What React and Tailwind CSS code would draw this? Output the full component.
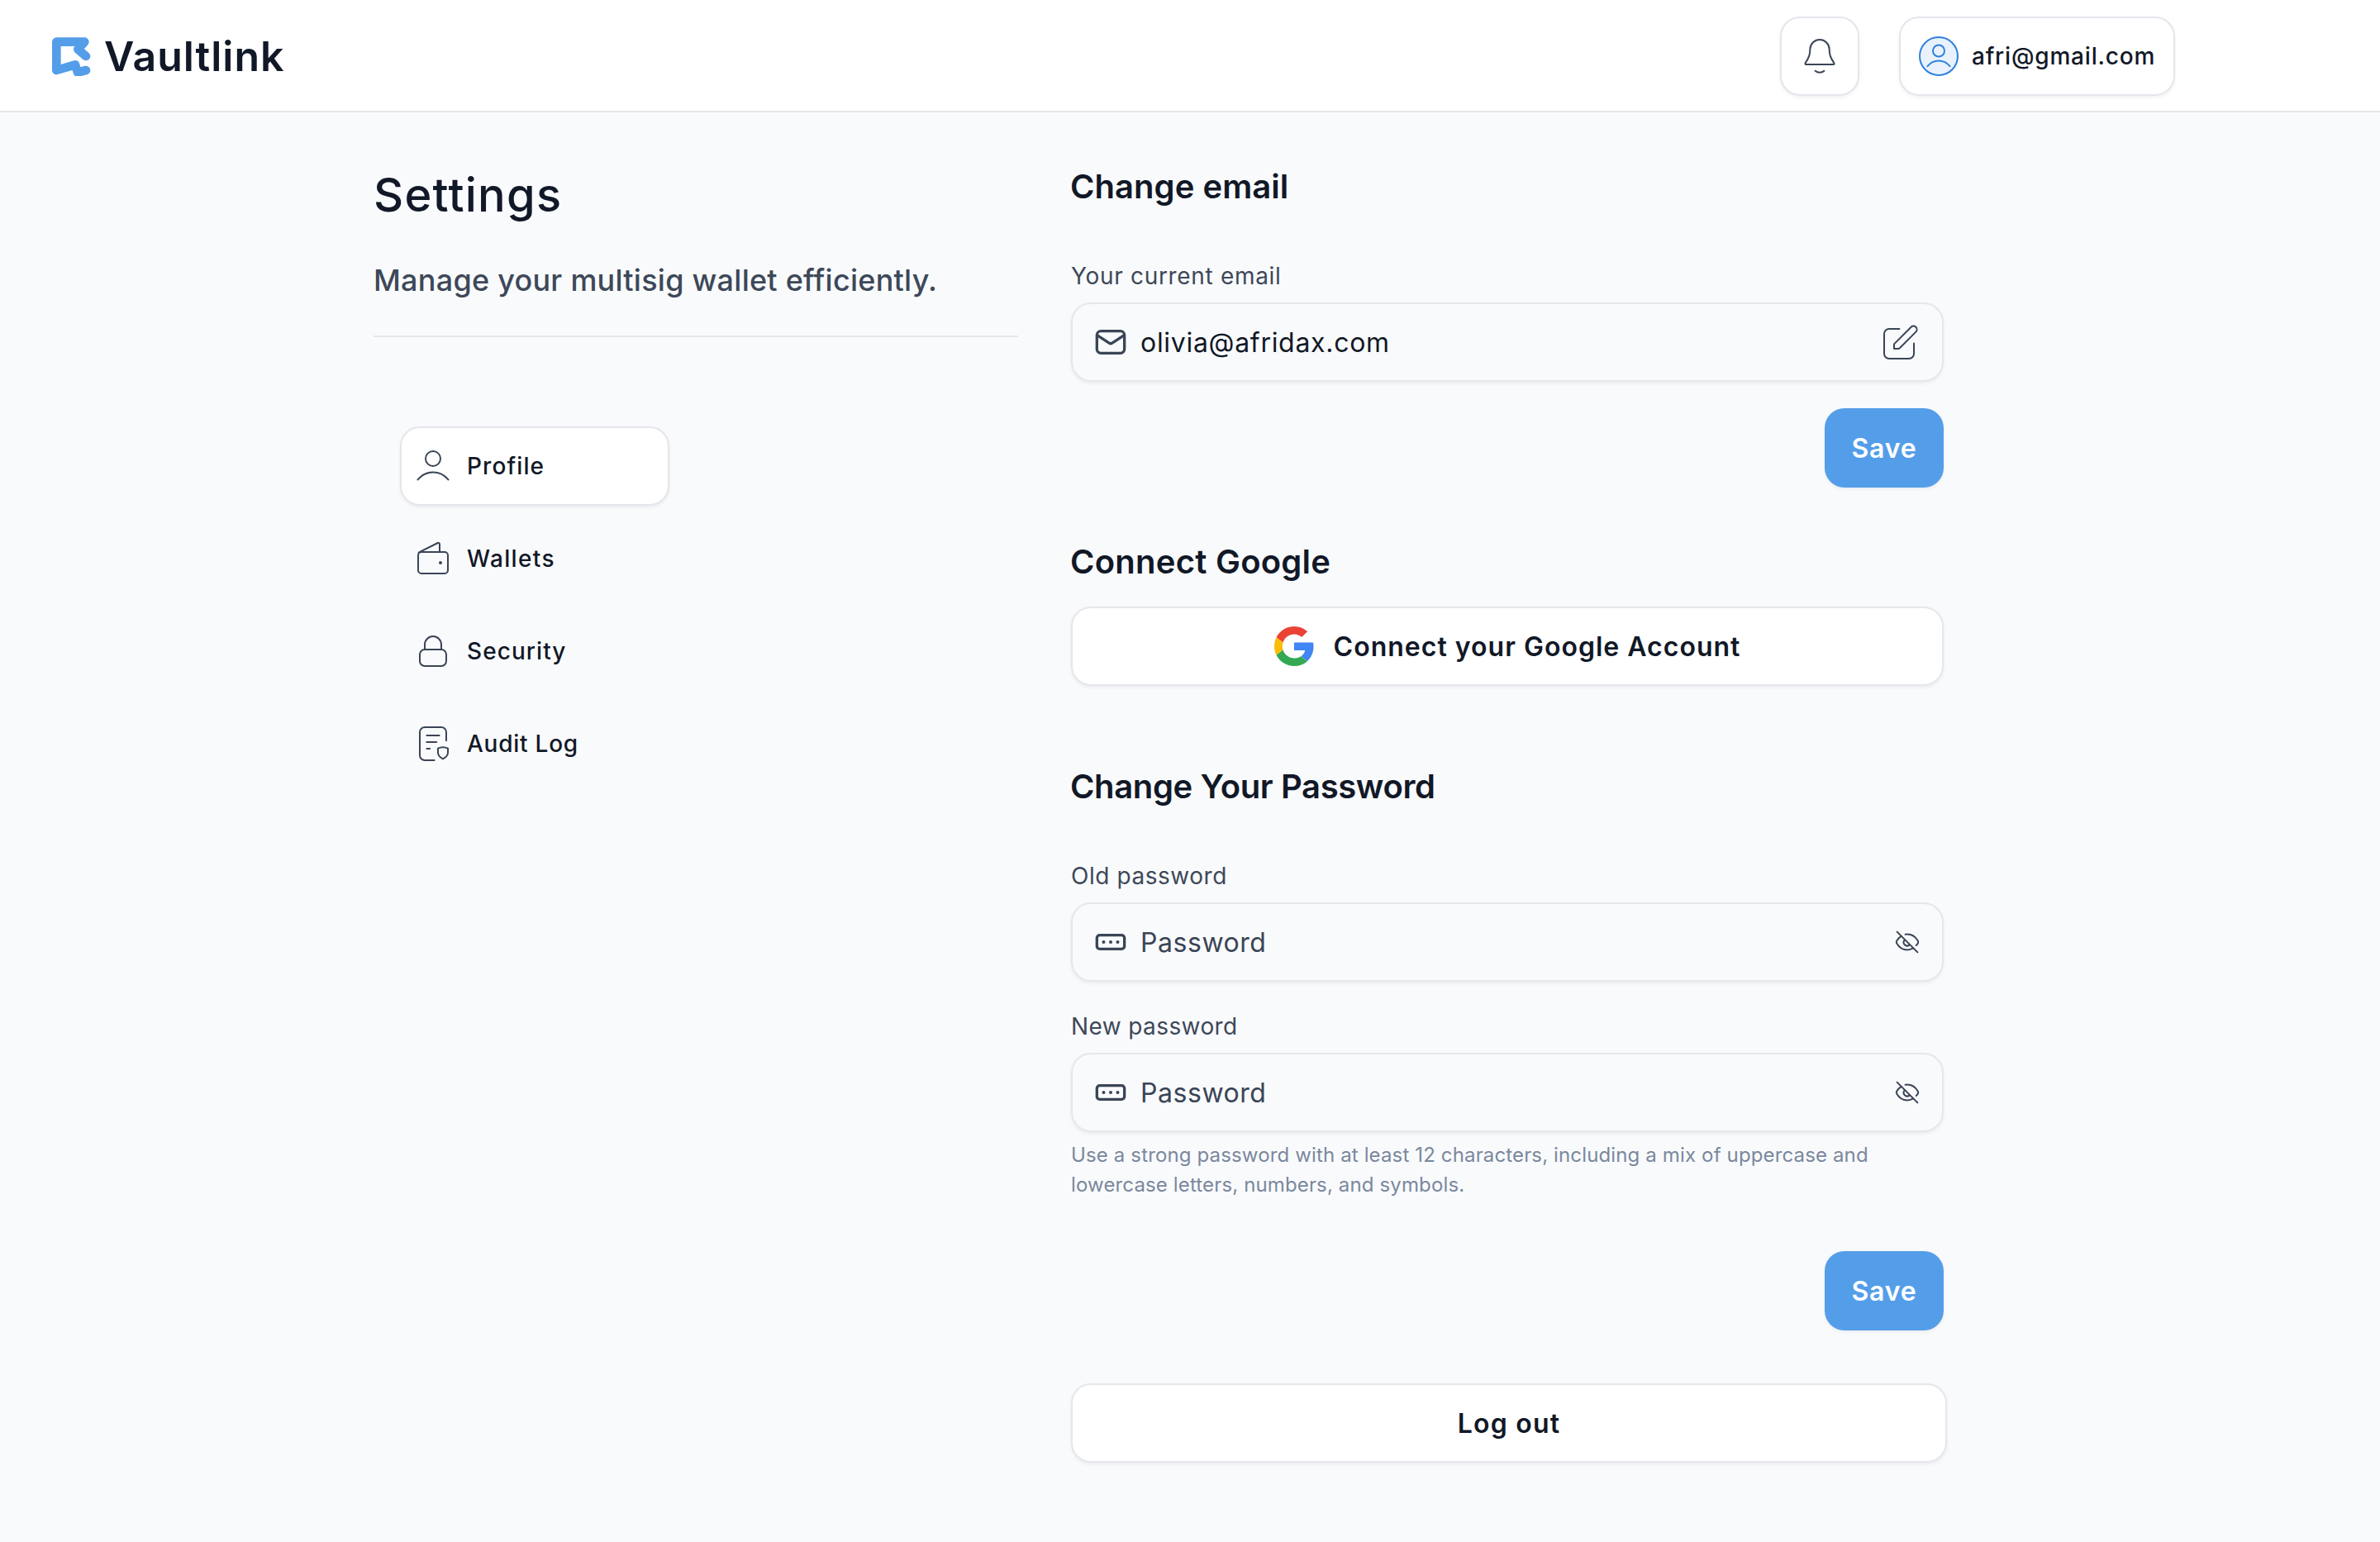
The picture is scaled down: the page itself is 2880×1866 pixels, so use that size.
const strokeProps = {
  fill: 'none',
  stroke: 'currentColor',
  strokeLinecap: 'round',
  strokeLinejoin: 'round',
};

function LogoMark() {
  return (
    <svg viewBox="69 72 141 144" className="w-[47px] h-12 shrink-0" fill="none">
      <path
        d="M192 144 163 119 187 92H85V195L153 175 162 203 192 195"
        stroke="#549EE9"
        strokeWidth="32"
        strokeLinecap="round"
        strokeLinejoin="round"
      />
    </svg>
  );
}

function BellIcon() {
  return (
    <svg viewBox="0 0 24 24" className="size-12" {...strokeProps}>
      <path d="M12 2a5.8 5.8 0 0 0-5.8 5.5c-.1 3.6-.5 5-2.9 8.7-.2.4 0 .8.4.8h16.6c.4 0 .6-.4.4-.8-2.4-3.7-2.8-5.1-2.9-8.7A5.8 5.8 0 0 0 12 2Z" />
      <path d="M9.3 20.9c.8.7 1.7 1 2.7 1s1.9-.3 2.7-1" />
    </svg>
  );
}

function Avatar() {
  return (
    <svg viewBox="0 0 24 24" className="size-12 shrink-0 text-[#2F80DE]" {...strokeProps}>
      <circle cx="12" cy="12" r="11.5" fill="#E9F2FC" />
      <circle cx="12" cy="8.75" r="3.5" />
      <path d="M5.2 18.1c1.7-2 4.1-3.3 6.8-3.3s5.1 1.3 6.8 3.3" />
    </svg>
  );
}

function UserIcon() {
  return (
    <svg viewBox="0 0 24 24" className="size-12 shrink-0" {...strokeProps}>
      <circle cx="12" cy="7.5" r="4.5" />
      <path d="M2.8 20.2c2.3-2.7 5.6-4.4 9.2-4.4s6.9 1.7 9.2 4.4" />
    </svg>
  );
}

function WalletIcon() {
  return (
    <svg viewBox="0 0 24 24" className="size-12 shrink-0" {...strokeProps}>
      <rect x="3" y="8" width="18" height="13" rx="2" />
      <path d="M3.4 8.3 14.9 2.5a.8.8 0 0 1 1.1.7V8" />
      <circle cx="16.5" cy="14.5" r="1" fill="currentColor" stroke="none" />
    </svg>
  );
}

function LockIcon() {
  return (
    <svg viewBox="0 0 24 24" className="size-12 shrink-0" {...strokeProps}>
      <rect x="4" y="11" width="16" height="10" rx="3" />
      <path d="M7 11V8a5 5 0 0 1 10 0v3" />
    </svg>
  );
}

function AuditIcon() {
  return (
    <svg viewBox="0 0 24 24" className="size-12 shrink-0" {...strokeProps}>
      <path d="M12.8 22H7a3 3 0 0 1-3-3V5a3 3 0 0 1 3-3h10a3 3 0 0 1 3 3v5.1" />
      <path d="M8.2 7h7.6M8.2 11h5.9M8.2 15h1.9" />
      <path d="M18 14.1c1 0 2 .2 3 .7v2.6c0 1.6-1.2 2.9-3 3.8-1.8-.9-3-2.2-3-3.8v-2.6c1-.5 2-.7 3-.7Z" />
    </svg>
  );
}

function MailIcon() {
  return (
    <svg viewBox="0 0 20 20" className="size-10 shrink-0" {...strokeProps} strokeWidth="1.667">
      <rect x="1.67" y="3.33" width="16.66" height="13.34" rx="2.4" />
      <path d="m2 5.9 7.1 4.7c.6.4 1.2.4 1.8 0L18 5.9" />
    </svg>
  );
}

function PasswordIcon() {
  return (
    <svg viewBox="0 0 20 20" className="size-10 shrink-0" {...strokeProps} strokeWidth="1.667">
      <rect x="1.67" y="5.83" width="16.66" height="8.34" rx="1.7" />
      <g fill="currentColor" stroke="none">
        <circle cx="5.75" cy="10" r="1" />
        <circle cx="10" cy="10" r="1" />
        <circle cx="14.25" cy="10" r="1" />
      </g>
    </svg>
  );
}

function EditIcon() {
  return (
    <svg viewBox="0 0 24 24" className="size-12 shrink-0" {...strokeProps}>
      <path d="M11.2 4H5a3 3 0 0 0-3 3v12a3 3 0 0 0 3 3h12a3 3 0 0 0 3-3v-6.2" />
      <path d="M8 16v-2.8L18.3 2.9a2.05 2.05 0 0 1 2.9 2.9L11.4 15.6c-.3.3-.6.4-.9.4Z" />
    </svg>
  );
}

function EyeOffIcon() {
  return (
    <svg viewBox="0 0 16 16" className="size-8 shrink-0" {...strokeProps}>
      <path d="m1.8 1.8 12.4 12.4" />
      <path d="M6.8 3.4c.4-.1.8-.1 1.2-.1 2.7 0 5 1.6 6.4 4 .3.5.3.9 0 1.4-.3.5-.6.9-1 1.3" />
      <path d="M4.3 4.4C3.2 5.1 2.3 6.1 1.6 7.3c-.3.5-.3.9 0 1.4 1.4 2.4 3.7 4 6.4 4 1.3 0 2.5-.4 3.6-1" />
      <path d="M6.3 6.8a2.1 2.1 0 0 0 2.9 3" />
    </svg>
  );
}

function GoogleIcon() {
  return (
    <svg viewBox="0 0 48 48" className="size-12 shrink-0">
      <path fill="#EA4335" d="M24 9.5c3.54 0 6.71 1.22 9.21 3.6l6.85-6.85C35.9 2.38 30.47 0 24 0 14.62 0 6.51 5.38 2.56 13.22l7.98 6.19C12.43 13.72 17.74 9.5 24 9.5z" />
      <path fill="#4285F4" d="M47.5 24.55c0-1.57-.15-3.09-.38-4.95H24v9.42h13.2c-.58 2.96-2.26 5.48-4.78 7.18l7.47 6c4.51-4.18 7.61-10.36 7.61-17.65z" />
      <path fill="#FBBC05" d="M10.53 28.59c-.48-1.45-.76-2.99-.76-4.59s.27-3.14.76-4.59l-7.98-6.19C.92 16.46 0 20.12 0 24c0 3.88.92 7.54 2.56 10.78l7.97-6.19z" />
      <path fill="#34A853" d="M24 48c6.48 0 11.93-2.13 15.89-5.81l-7.73-6c-2.15 1.45-4.92 2.3-8.16 2.3-6.26 0-11.57-4.22-13.47-9.91l-7.98 6.19C6.51 42.62 14.62 48 24 48z" />
    </svg>
  );
}

const shadow = 'shadow-[0_2px_4px_rgba(16,24,40,0.06)]';

const navItems = [
  { label: 'Profile', icon: UserIcon, spacing: 'tracking-[1.1px]', active: true },
  { label: 'Wallets', icon: WalletIcon, spacing: 'tracking-[1.35px]' },
  { label: 'Security', icon: LockIcon, spacing: 'tracking-[1.06px]' },
  { label: 'Audit Log', icon: AuditIcon, spacing: 'tracking-[0.75px]' },
];

function Header() {
  return (
    <header className="flex justify-between h-[136px] pt-5 pl-[63px] pr-[248px] bg-white border-b-2 border-[#E5E7EB]">
      <div className="flex items-center h-24 gap-4">
        <LogoMark />
        <span className="text-[50px] leading-none font-semibold tracking-[0.97px]">Vaultlink</span>
      </div>
      <div className="flex h-24 gap-12">
        <button className={`flex items-center justify-center w-24 h-24 rounded-3xl border-2 border-[#E5E6EC] text-[#3A4556] ${shadow}`}>
          <BellIcon />
        </button>
        <button className={`flex items-center gap-4 w-[334px] h-24 pl-[22px] rounded-3xl border-2 border-[#E5E6EC] ${shadow}`}>
          <Avatar />
          <span className="text-[28px] leading-10 font-medium tracking-[0.8px]">afri@gmail.com</span>
        </button>
      </div>
    </header>
  );
}

function Sidebar() {
  return (
    <aside className="w-[780px] pt-[68px]">
      <h1 className="text-[56px] leading-[64px] font-medium tracking-[1.27px]">Settings</h1>
      <p className="mt-[47px] text-4xl leading-[48px] font-medium tracking-[0.25px] text-[#3D4858]">
        Manage your multisig wallet efficiently.
      </p>
      <hr className="mt-[43px] border-t-2 border-[#E5E7EB]" />
      <nav className="flex flex-col gap-4 mt-[108px] ml-8">
        {navItems.map(({ label, icon: Icon, spacing, active }) => (
          <a
            key={label}
            className={`flex items-center gap-[17px] w-[326px] h-24 pl-3.5 rounded-3xl border-2 ${
              active ? `bg-white border-[#E5E6EC] ${shadow}` : 'border-transparent'
            }`}
          >
            <span className="text-[#3A4556]">
              <Icon />
            </span>
            <span className={`text-[28px] leading-10 font-medium ${spacing}`}>{label}</span>
          </a>
        ))}
      </nav>
    </aside>
  );
}

function Field({ label, labelClass, icon, value, valueClass, action }) {
  return (
    <div>
      <div className={`text-[28px] leading-10 text-[#3D4858] ${labelClass}`}>{label}</div>
      <div className={`flex items-center gap-4 h-24 mt-3 px-[26px] rounded-3xl border-2 border-[#E5E7EB] text-[#3A4556] ${shadow}`}>
        {icon}
        <span className={`flex-1 pt-0.5 text-[32px] leading-[48px] ${valueClass}`}>{value}</span>
        {action}
      </div>
    </div>
  );
}

function SaveButton() {
  return (
    <button className={`block w-36 h-24 pt-0.5 ml-auto rounded-3xl bg-[#549EE9] text-white text-[32px] leading-[48px] font-semibold tracking-[0.82px] ${shadow}`}>
      Save
    </button>
  );
}

export default function App() {
  return (
    <div className="min-h-[1866px] bg-[#F9FAFC] text-[#111827] font-['Inter','Liberation_Sans',sans-serif]">
      <Header />
      <main className="flex gap-16 pl-[452px]">
        <Sidebar />
        <section className="w-[1056px] pt-[66px]">
          <h2 className="mb-16 -ml-px text-[40px] leading-[48px] font-semibold tracking-[0.05px]">Change email</h2>
          <Field
            label="Your current email"
            labelClass="tracking-[0.68px]"
            icon={<MailIcon />}
            value="olivia@afridax.com"
            valueClass="text-[#111827] tracking-[0.7px]"
            action={<EditIcon />}
          />
          <div className="mt-8">
            <SaveButton />
          </div>

          <h2 className="mt-[66px] -ml-px text-[40px] leading-[48px] font-semibold tracking-[0.25px]">Connect Google</h2>
          <button className={`flex items-center justify-center gap-6 w-full h-24 mt-[30px] bg-white rounded-3xl border-2 border-[#E5E7EB] ${shadow}`}>
            <GoogleIcon />
            <span className="pt-0.5 text-[32px] leading-[48px] font-semibold tracking-[1.01px]">Connect your Google Account</span>
          </button>

          <h2 className="mt-[98px] mb-16 -ml-px text-[40px] leading-[48px] font-semibold tracking-[-0.38px]">
            Change Your Password
          </h2>
          <Field
            label="Old password"
            labelClass="tracking-[0.55px]"
            icon={<PasswordIcon />}
            value="Password"
            valueClass="tracking-[0.55px]"
            action={<EyeOffIcon />}
          />
          <div className="mt-[34px]">
            <Field
              label="New password"
              labelClass="tracking-[0.4px]"
              icon={<PasswordIcon />}
              value="Password"
              valueClass="tracking-[0.55px]"
              action={<EyeOffIcon />}
            />
          </div>
          <p className="mt-2.5 text-2xl leading-9 tracking-[0.14px] text-[#7A889D]">
            Use a strong password with at least 12 characters, including a mix of uppercase and
            <br />
            lowercase letters, numbers, and symbols.
          </p>
          <div className="mt-[62px]">
            <SaveButton />
          </div>
          <button className={`block w-[1060px] h-24 pt-0.5 mt-16 bg-white rounded-3xl border-2 border-[#E5E7EB] text-[32px] leading-[48px] font-semibold tracking-[1.21px] ${shadow}`}>
            Log out
          </button>
        </section>
      </main>
    </div>
  );
}
